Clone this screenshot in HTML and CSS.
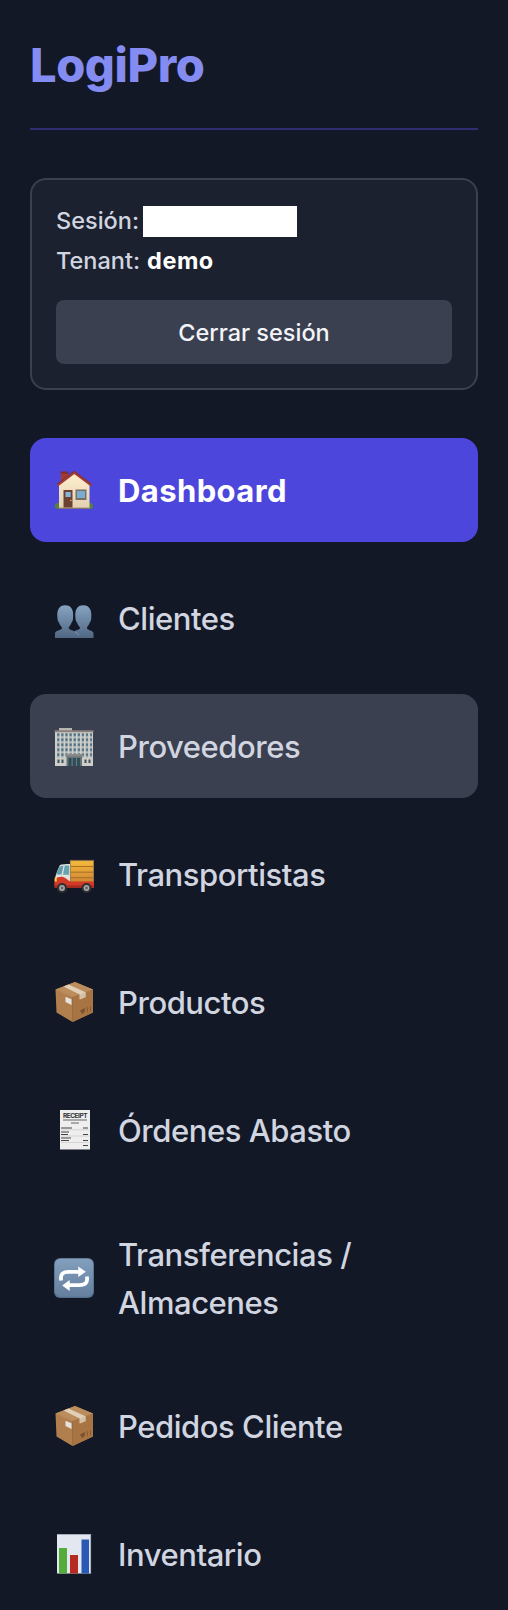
FILE: index.html
```html
<!DOCTYPE html>
<html lang="es">
<head>
  <meta charset="UTF-8" />
  <meta name="viewport" content="width=device-width, initial-scale=1.0"/>
  <title>LogiPro</title>
  <link rel="stylesheet" href="styles.css">
</head>
<body>
  <!-- Iconos y degradados compartidos -->
  <svg class="defs" aria-hidden="true">
    <defs>
      <linearGradient id="wall" x1="0" y1="0" x2="0" y2="1"><stop offset="0" stop-color="#fff0cf"/><stop offset="1" stop-color="#e2d0b0"/></linearGradient>
      <linearGradient id="people" gradientUnits="userSpaceOnUse" x1="0" y1="7" x2="0" y2="40"><stop offset="0" stop-color="#86a4c2"/><stop offset="1" stop-color="#506783"/></linearGradient>
      <linearGradient id="cargo" x1="0" y1="0" x2="0" y2="1"><stop offset="0" stop-color="#f7bd3c"/><stop offset="1" stop-color="#c77b32"/></linearGradient>
      <linearGradient id="tile" x1="0" y1="0" x2="0" y2="1"><stop offset="0" stop-color="#829fbd"/><stop offset="1" stop-color="#65809f"/></linearGradient>
      <pattern id="windows" x="2.2" y="6.5" width="4.1" height="5" patternUnits="userSpaceOnUse"><rect x="1" y="0.6" width="2.2" height="3.2" fill="#4b6d80"/></pattern>
      <symbol id="box" viewBox="0 0 40 40">
        <path d="M1.500 7.500 21 0l18 7.500V30.500L18.500 40 2.500 30.500Z" fill="#b17e4e"/>
        <path d="M1.500 7.500 21 0l18 7.500-20.500 7.500Z" fill="#bb8c5c"/>
        <path d="M18.500 15 39 7.500V30.500L18.500 40Z" fill="#a87443"/>
        <path d="M9.500 4.500 14.500 2.500 31.500 10.300V15l-5.800 2.400v-5Z" fill="#e0d0b8"/>
        <path d="M25.700 12.400 31.500 10.300V15l-5.800 2.400Z" fill="#d5c0a2"/>
        <path d="m11.500 14.800 6 2.500v5.600l-6-2.800Z" fill="#e3e3df"/>
        <path d="m26.500 28.500 4.500-2-1.500 4.500-1.500.6ZM33.500 25.200v5M36.500 24.200v5" fill="#7b512c" stroke="#7b512c" stroke-width=".7"/>
        <path d="M18.500 15v25" stroke="#8f6238" stroke-width=".6"/>
      </symbol>
    </defs>
  </svg>

  <aside class="sidebar">
    <h1 class="logo">LogiPro</h1>

    <div class="session">
      <p class="session-row">Sesión: <span class="user-mask"></span></p>
      <p class="session-row">Tenant: <strong>demo</strong></p>
      <button class="logout">Cerrar sesión</button>
    </div>

    <nav class="menu">
      <a class="item active" href="#">
        <svg class="icon" viewBox="0 0 40 40">
          <ellipse cx="4" cy="36" rx="3.200" ry="3" fill="#55813c"/><ellipse cx="36" cy="36" rx="3" ry="3" fill="#55813c"/>
          <path d="M7 2h7v10H7Z" fill="#a33b32"/><path d="M6.500 1.500h8v2.300h-8Z" fill="#7d2f32"/>
          <path d="M5 14.500 20.500 3 35.500 14.500V38.500H5Z" fill="url(#wall)"/>
          <path d="M5 38.300h30.500" stroke="#81706b" stroke-width="1.200"/>
          <path d="M3.500 15.300 20.300 2.500l17 12.800" fill="none" stroke="#a63e36" stroke-width="2.600"/>
          <path d="M3 14.300 20.300 1.300l17.200 13" fill="none" stroke="#6f292f" stroke-width=".8"/>
          <rect x="9.500" y="20" width="9" height="17.500" fill="#6d4132"/><rect x="11.500" y="22" width="5.200" height="5" fill="#86b5dc"/><circle cx="16.800" cy="30.500" r=".8" fill="#ddb567"/>
          <rect x="21.500" y="19.500" width="11" height="10.500" fill="#7b6e65"/><rect x="23" y="21" width="8" height="7" fill="#78add2"/>
        </svg>
        <span>Dashboard</span>
      </a>
      <a class="item" href="#">
        <svg class="icon" viewBox="0 0 40 40">
          <path d="M1 40v-4.500c0-3.500 6.500-3.100 7-5.300.2-1.500-2-2.500-3-5.500-.9-1-1.500-2.700-1.500-4.200C2.500 12 5 7.300 11.200 7.300S20 12 19 20.500c0 1.500-.6 3.200-1.500 4.200-1 3-3 4-2.800 5.500.5 2.200 7 1.800 8.300 5.300V40Z" fill="url(#people)"/>
          <path d="M17 40v-4c1.200-3.800 8.500-3.500 9-5.800.2-1.500-2-2.500-2.900-5.500-1-1-1.600-2.700-1.600-4.200-1-8.500 1.500-13.200 7.700-13.200s9 4.700 8 13.200c0 1.500-.6 3.200-1.500 4.200-1 3-3 4-2.800 5.500.5 2.200 6.600 1.800 6.600 5.300V40Z" fill="url(#people)"/>
          <path d="M21 34.500c2-.3 3.300 1 3.800 3" fill="none" stroke="#7f9ab8" stroke-width=".8"/>
        </svg>
        <span>Clientes</span>
      </a>
      <a class="item hover" href="#">
        <svg class="icon" viewBox="0 0 40 40">
          <path d="M5 2h13v3H5Z" fill="#b7b5b2"/>
          <path d="M1 6h38v34H1Z" fill="#cfcfca"/>
          <path d="M.5 4.300h39v2H.5Z" fill="#8d817d"/>
          <rect x="2.200" y="7" width="36" height="25" fill="url(#windows)"/>
          <path d="M3.500 33.500h2v3.500h-2Zm4 0h2v3.500h-2Zm23 0h2v3.500h-2Zm4 0h2v3.500h-2Z" fill="#3e525d"/>
          <path d="M12.500 29h15.500V40H12.500Z" fill="#66757b"/><path d="M11.500 28h17.500v2.500H11.500Z" fill="#8b8987"/>
          <path d="M14.500 32h3V40h-3Zm4.300 0h3V40h-3Zm4.300 0h3V40h-3Z" fill="#2d4d58"/>
        </svg>
        <span>Proveedores</span>
      </a>
      <a class="item" href="#">
        <svg class="icon" viewBox="0 0 40 40">
          <path d="M16 6h24v26H16Z" fill="url(#cargo)"/><path d="M16 6.500h24" stroke="#8b6e49" stroke-width="1.200"/>
          <path d="M17 12.500h22.500M17 18.200h22.500M17 23.700h22.500" stroke="#a16825" stroke-width=".9"/>
          <path d="M16.300 6v24M39.500 6v25" stroke="#8c7250" stroke-width=".8"/>
          <path d="M6 11c1.800-.8 6-1 10-1v18H1c-.5-5 2-11 5-17Z" fill="#dfe1dd"/>
          <path d="M6 12.500 9.500 11.500 7.500 20.500H2.500C3.300 17 4.400 14.500 6 12.500Z" fill="#609cad"/><path d="M10.700 11.500h4.500v9.200H9Z" fill="#67a4b2"/>
          <path d="M.7 25c4-2.500 8-3 11.300-.5l4 3h24v6.500H1c-1-2-.8-6-.3-9Z" fill="#d23926"/><path d="M.5 31.500h39v2.500H.5Z" fill="#a32a21"/>
          <path d="M.7 23.500h2v4h-2Z" fill="#ffd14f"/>
          <circle cx="8" cy="34" r="5" fill="#302f31"/><circle cx="8" cy="34" r="2.900" fill="#aaa"/><circle cx="8" cy="34" r="1.400" fill="#666"/>
          <circle cx="32.500" cy="34" r="5" fill="#302f31"/><circle cx="32.500" cy="34" r="2.900" fill="#aaa"/><circle cx="32.500" cy="34" r="1.400" fill="#666"/>
        </svg>
        <span>Transportistas</span>
      </a>
      <a class="item" href="#">
        <svg class="icon"><use href="#box"/></svg>
        <span>Productos</span>
      </a>
      <a class="item" href="#">
        <svg class="icon" viewBox="0 0 40 40">
          <rect x="6" width="30" height="39.500" fill="#edeeed"/>
          <text class="receipt-title" x="21" y="8" text-anchor="middle" textLength="24" lengthAdjust="spacingAndGlyphs">RECEIPT</text>
          <path d="M9 10h24M17 13h8" stroke="#666" stroke-width="1"/>
          <path d="M7 18h11M7 22h8M7 24.500h7M7 28h10M7 30.500h8M29 18h5M29 24.500h5M29 30.500h5M29 35.500h5" stroke="#444" stroke-width="1.200"/>
          <path d="M7 19.800h28M7 26h28M7 32.500h28" stroke="#bbb" stroke-width=".5"/>
        </svg>
        <span>Órdenes Abasto</span>
      </a>
      <a class="item" href="#">
        <svg class="icon" viewBox="0 0 40 40">
          <rect width="40" height="40" rx="6" fill="#546e8b"/><rect x=".8" y=".7" width="38.400" height="38" rx="5.500" fill="url(#tile)"/>
          <path d="M7.200 22.500C6 16.500 8.500 13.800 14.500 13.800H25M32.800 18.500c1.200 6-1.300 8.700-7.300 8.700H15" fill="none" stroke="#fff" stroke-width="3.800"/>
          <path d="m24.300 8.500 7.500 5.200-7.500 5.200ZM15.700 22v11l-7.500-5.500Z" fill="#fff"/>
        </svg>
        <span>Transferencias / Almacenes</span>
      </a>
      <a class="item" href="#">
        <svg class="icon"><use href="#box"/></svg>
        <span>Pedidos Cliente</span>
      </a>
      <a class="item" href="#">
        <svg class="icon" viewBox="0 0 40 40">
          <rect x="3" width="34" height="39.500" fill="#e2e7f0"/><path d="M3 .5h34M36.600 0v39.500" stroke="#a4aebb" stroke-width="1"/>
          <path d="M5 14h8v25.500H5Z" fill="#54ad3b"/><path d="M16 21h8v18.500h-8Z" fill="#b52b21"/><path d="M27.500 5.500H35v34h-7.500Z" fill="#2958b5"/>
        </svg>
        <span>Inventario</span>
      </a>
    </nav>
  </aside>
</body>
</html>
```
FILE: styles.css
```css
* {
  box-sizing: border-box;
}

body {
  margin: 0;
  background: #121826;
  color: #d1d5e0;
  font-family: Inter, "Liberation Sans", sans-serif;
}

.defs {
  position: absolute;
  width: 0;
  height: 0;
}

.sidebar {
  height: 1610px;
  padding: 32px 30px 0;
  overflow: hidden;
}

.logo {
  height: 98px;
  margin: 0 0 48px;
  border-bottom: 2px solid #302e73;
  color: #848cf2;
  font-size: 47px;
  font-weight: 850;
  line-height: 65px;
  letter-spacing: -0.4px;
}

.session {
  height: 212px;
  margin-bottom: 48px;
  padding: 20px 24px;
  background: #1b212e;
  border: 2px solid #394050;
  border-radius: 16px;
}

.session-row {
  display: flex;
  align-items: center;
  gap: 7px;
  height: 40px;
  margin: 0;
  font-size: 23.5px;
  font-weight: 450;
}

.session-row strong {
  color: #fff;
  font-weight: 700;
  letter-spacing: 0.5px;
}

.user-mask {
  width: 154px;
  height: 31px;
  margin: 2px 0 0 -3px;
  background: #fff;
}

.logout {
  display: block;
  width: 100%;
  height: 64px;
  margin-top: 20px;
  background: #3a404f;
  border: 0;
  border-radius: 8px;
  color: #f3f4f9;
  font: 500 23.5px Inter, "Liberation Sans", sans-serif;
  cursor: pointer;
}

.menu {
  display: flex;
  flex-direction: column;
  gap: 24px;
}

.item {
  display: flex;
  align-items: center;
  gap: 24px;
  min-height: 104px;
  padding: 24px;
  border-radius: 16px;
  color: inherit;
  font-size: 31px;
  font-weight: 450;
  line-height: 48px;
  letter-spacing: -0.45px;
  text-decoration: none;
}

.item span {
  margin: 1px 0 -1px;
}

.item.active {
  background: #4d46dc;
  color: #fff;
  font-weight: 700;
  letter-spacing: 0.4px;
}

.item.hover {
  background: #3a404f;
}

.icon {
  flex: none;
  width: 40px;
  height: 40px;
}

.receipt-title {
  fill: #333;
  font: 700 6px Inter, sans-serif;
}
```
